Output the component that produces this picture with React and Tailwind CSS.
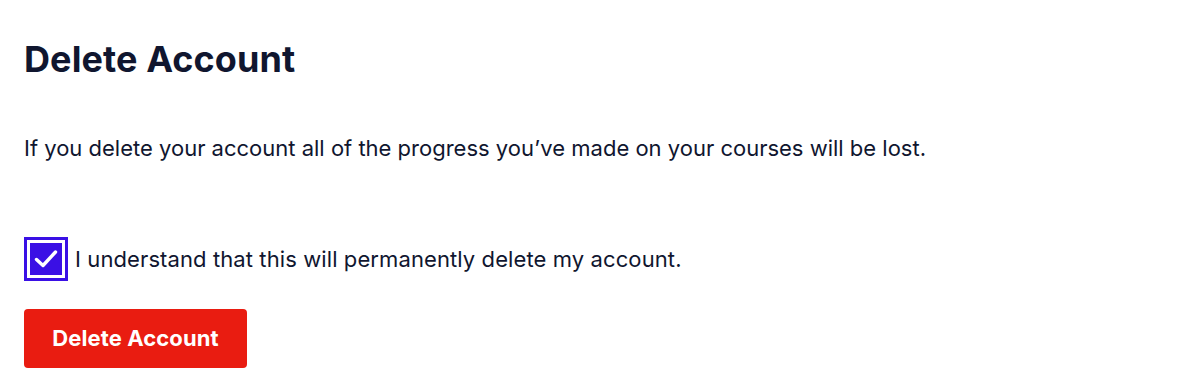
export default function App() {
  return (
    <div className="bg-white min-h-screen px-6 pt-[36px] text-[#10162f]" style={{ fontFamily: "Inter, 'Noto Sans', sans-serif" }}>
      <h1 className="text-[36px] font-bold leading-[46px] tracking-[0.1px]">Delete Account</h1>

      <p className="mt-[51px] text-[22px] leading-[30px]">
        If you delete your account all of the progress you’ve made on your courses will be lost.
      </p>

      {/* confirm checkbox */}
      <label className="mt-[74px] flex items-center gap-[7px] cursor-pointer">
        <span className="w-[44px] h-[44px] border-[3px] border-[#3a10e5] bg-white p-[3px] flex-shrink-0">
          <span className="flex w-full h-full items-center justify-center bg-[#3a10e5]">
            <svg width="24" height="20" viewBox="0 0 24 20" fill="none">
              <path d="M2.5 10.5 L9 16.5 L21.5 3" stroke="white" strokeWidth="3.4" strokeLinecap="round" strokeLinejoin="round" />
            </svg>
          </span>
        </span>
        <span className="text-[22px] leading-[30px] tracking-[0.1px]">I understand that this will permanently delete my account.</span>
      </label>

      <button className="mt-[28px] h-[59px] w-[223px] rounded-[4px] bg-[#e91c11] text-white text-[22px] font-bold tracking-[0.1px]">
        Delete Account
      </button>
    </div>
  )
}
